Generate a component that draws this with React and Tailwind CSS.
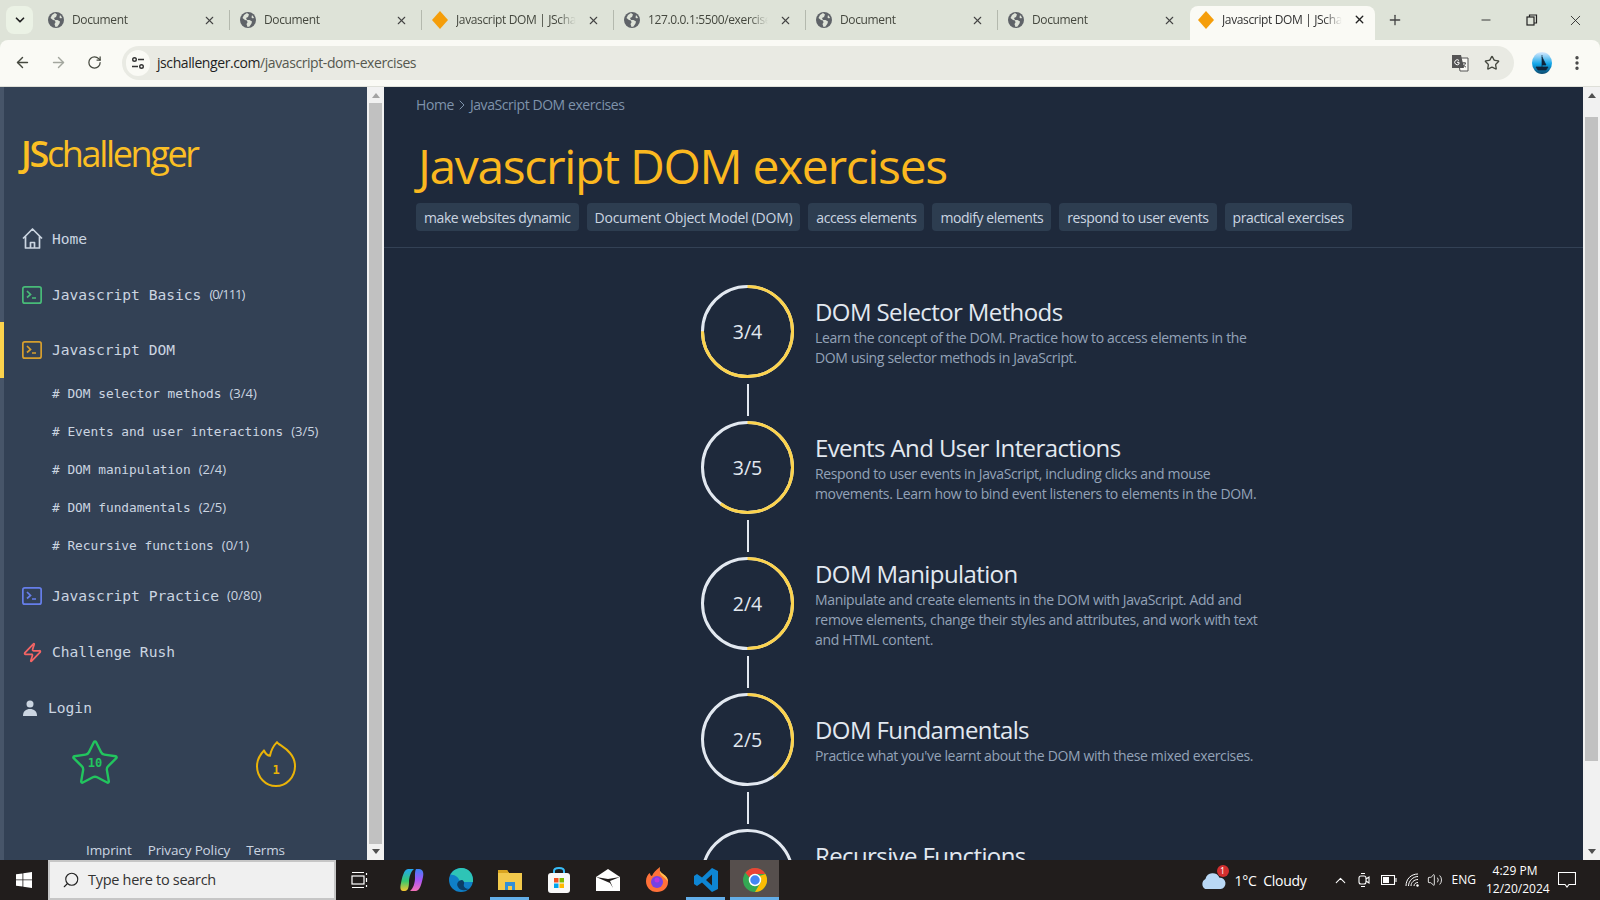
import React from 'react';
import { ArrowLeft, ArrowRight, RotateCw, Star, X, Plus, Minus, ChevronDown, ChevronUp, ChevronRight, EllipsisVertical, Zap, Search, Volume2 } from 'lucide-react';

const sans = 'font-["Open_Sans",sans-serif]';
const mono = 'font-["DejaVu_Sans_Mono",monospace]';

const tabs = [
  { title: 'Document', icon: 'globe' },
  { title: 'Document', icon: 'globe' },
  { title: 'Javascript DOM | JSchallenger', icon: 'js' },
  { title: '127.0.0.1:5500/exercises', icon: 'globe' },
  { title: 'Document', icon: 'globe' },
  { title: 'Document', icon: 'globe' },
];

const chips = [
  'make websites dynamic',
  'Document Object Model (DOM)',
  'access elements',
  'modify elements',
  'respond to user events',
  'practical exercises',
];

const subItems = [
  ['# DOM selector methods', '(3/4)'],
  ['# Events and user interactions', '(3/5)'],
  ['# DOM manipulation', '(2/4)'],
  ['# DOM fundamentals', '(2/5)'],
  ['# Recursive functions', '(0/1)'],
];

const lessons = [
  {
    done: 3,
    total: 4,
    title: 'DOM Selector Methods',
    text: 'Learn the concept of the DOM. Practice how to access elements in the DOM using selector methods in JavaScript.',
  },
  {
    done: 3,
    total: 5,
    title: 'Events And User Interactions',
    text: 'Respond to user events in JavaScript, including clicks and mouse movements. Learn how to bind event listeners to elements in the DOM.',
  },
  {
    done: 2,
    total: 4,
    title: 'DOM Manipulation',
    text: 'Manipulate and create elements in the DOM with JavaScript. Add and remove elements, change their styles and attributes, and work with text and HTML content.',
  },
  {
    done: 2,
    total: 5,
    title: 'DOM Fundamentals',
    text: "Practice what you've learnt about the DOM with these mixed exercises.",
  },
  // description sits below the fold, only the title shows
  { done: 0, total: 1, title: 'Recursive Functions', text: '' },
];

const GlobeIcon = () => (
  <svg width="16" height="16" viewBox="0 0 16 16" className="shrink-0">
    <circle cx="8" cy="8" r="8" fill="#5f6368" />
    <path d="M7 1 4 3 2.500 6 5 8l2 .5.500 2-1 1.500 1 3 2-.5 2-3 .5-2-2.500-1.500H7L6 6l2-1 1-2.500Z M12 3l2 2.500-1 1-1.500-1Z" fill="#dee3d8" />
  </svg>
);

const DiamondIcon = () => (
  <svg width="16" height="18" viewBox="0 0 16 18" className="shrink-0">
    <path d="M8 0 16 9 8 18 0 9Z" fill="#f59e0b" />
  </svg>
);

const Tab = ({ title, icon, last }) => (
  <div className="relative flex h-full w-[192px] shrink-0 items-center pl-[8px]">
    {icon === 'globe' ? <GlobeIcon /> : <DiamondIcon />}
    <span className={`${sans} ml-[8px] w-[120px] overflow-hidden whitespace-nowrap text-[12px] tracking-[-0.03em] text-[#45483f] [mask-image:linear-gradient(to_right,black_85%,transparent)]`}>{title}</span>
    <X size={13} strokeWidth={2} className="absolute left-[163px] text-[#444]" />
    {!last && <span className="absolute left-[189px] h-[20px] w-px bg-[#b4b9ae]" />}
  </div>
);

const TranslateIcon = () => (
  <svg width="18" height="18" viewBox="0 0 18 18" className="ml-auto">
    <path d="M7 4h10v13H9Z" fill="#fafaf5" stroke="#555" strokeWidth="1" />
    <path d="M1 1h9l3 13H1Z" fill="#555" />
    <path d="M8 6.500a2.500 2.500 0 1 0 0 3.500V8.300H6" fill="none" stroke="#fff" strokeWidth="1" />
    <path d="M11 9h4M13 8v1M14.500 9c-.5 2-2 3.500-3.500 4M12 10.500c.5 1 1.500 2 3 2.500" fill="none" stroke="#444" strokeWidth=".9" />
  </svg>
);

const AvatarIcon = () => (
  <svg width="20" height="22" viewBox="0 0 20 22" className="shrink-0">
    <defs>
      <linearGradient id="avatarSky" x1="0" y1="0" x2="0" y2="1">
        <stop offset="0" stopColor="#dbeafe" />
        <stop offset=".55" stopColor="#0ea5e9" />
        <stop offset="1" stopColor="#0c4a6e" />
      </linearGradient>
    </defs>
    <ellipse cx="10" cy="11" rx="10" ry="11" fill="url(#avatarSky)" />
    <path d="M10 3v12M10 5l4 8h-4M4 15h12l-2 3H6Z" fill="#10243a" stroke="#10243a" strokeWidth=".7" />
  </svg>
);

const ChromeBar = () => (
  <div>
    <div className="flex h-[40px] items-center bg-[#dee3d8]">
      <div className="ml-[6px] mr-[7px] flex h-[28px] w-[27px] items-center justify-center rounded-lg bg-[#ebf2e5]">
        <ChevronDown size={14} strokeWidth={3} className="text-[#222]" />
      </div>
      <div className="flex h-full items-center">
        {tabs.map((tab, i) => (
          <Tab key={i} {...tab} last={i === tabs.length - 1} />
        ))}
      </div>
      <div className="relative ml-[-2px] flex h-[34px] w-[185px] shrink-0 items-center self-end rounded-t-lg bg-[#fafaf5] pb-[6px] pl-[8px]">
        <DiamondIcon />
        <span className={`${sans} ml-[8px] w-[120px] overflow-hidden whitespace-nowrap text-[12px] tracking-[-0.03em] text-[#333] [mask-image:linear-gradient(to_right,black_85%,transparent)]`}>Javascript DOM | JSchallenger</span>
        <X size={13} strokeWidth={2.500} className="absolute left-[163px] top-[7px] text-[#222]" />
      </div>
      <Plus size={16} strokeWidth={2} className="ml-[12px] text-[#444]" />
      <Minus size={14} strokeWidth={1.500} className="ml-[76px] text-[#222]" />
      <svg width="12" height="12" viewBox="0 0 12 12" className="ml-[33px]" fill="none" stroke="#222" strokeWidth="1.200">
        <rect x="1" y="3" width="7" height="8" />
        <path d="M3.500 3V1h7v8H8" />
      </svg>
      <X size={17} strokeWidth={1.200} className="ml-[29px] text-[#222]" />
    </div>
    <div className="flex h-[47px] items-center rounded-t-lg border-b border-[#dedfd8] bg-[#fafaf5] pb-[1px]">
      <ArrowLeft size={17} strokeWidth={2} className="ml-[14px] text-[#45483f]" />
      <ArrowRight size={17} strokeWidth={2} className="ml-[19px] text-[#a3a69e]" />
      <RotateCw size={15} strokeWidth={2} className="ml-[20px] text-[#45483f]" />
      <div className="ml-[20px] flex h-[34px] w-[1392px] items-center rounded-full bg-[#e9eae3] pl-[4px] pr-[14px]">
        <div className="flex h-[26px] w-[24px] items-center justify-center rounded-full bg-[#fafaf5]">
          <svg width="14" height="14" viewBox="0 0 14 14" fill="none" stroke="#333" strokeWidth="1.400">
            <circle cx="3.500" cy="3.500" r="1.800" />
            <path d="M7 3.500h6M1 10.500h6" />
            <circle cx="10.500" cy="10.500" r="1.800" />
          </svg>
        </div>
        <span className={`${sans} ml-[7px] text-[14px] tracking-[-0.03em] text-[#1f1f1f]`}>
          jschallenger.com<span className="text-[#55584f]">/javascript-dom-exercises</span>
        </span>
        <TranslateIcon />
        <Star size={16} strokeWidth={2} className="ml-[15px] text-[#45483f]" />
      </div>
      <div className="ml-[18px]"><AvatarIcon /></div>
      <EllipsisVertical size={18} strokeWidth={2.500} className="ml-[16px] text-[#444]" />
    </div>
  </div>
);

const TerminalIcon = ({ color }) => (
  <svg width="20" height="18" viewBox="0 0 20 18" fill="none" stroke={color} strokeWidth="1.700" className="shrink-0">
    <rect x=".85" y=".85" width="18.300" height="16.300" rx="2" />
    <path d="m5 5 3.500 3.500L5 11.500M10 12h4" />
  </svg>
);

const HomeIcon = () => (
  <svg width="21" height="21" viewBox="0 0 21 21" fill="none" stroke="#cbd5e1" strokeWidth="1.700" strokeLinejoin="round" className="shrink-0">
    <path d="M1 10.500 10.500 1 20 10.500M3.500 8v12h14V8M8.500 20v-5.500h4V20" />
  </svg>
);

const UserIcon = () => (
  <svg width="16" height="16" viewBox="0 0 16 16" fill="#cbd5e1" className="shrink-0">
    <circle cx="8" cy="4" r="3.500" />
    <path d="M1 16c0-5 3-7 7-7s7 2 7 7Z" />
  </svg>
);

const NavItem = ({ icon, label, count, active }) => (
  <div className="relative flex h-[56px] items-center pl-[18px]">
    {active && <span className="absolute left-[-4px] top-0 h-full w-[4px] bg-[#fcd34d]" />}
    <span className="flex w-[30px] shrink-0 items-center">{icon}</span>
    <span className={`${mono} text-[14.600px] text-[#cbd5e1]`}>{label}</span>
    {count && (
      <span className={`${sans} ml-[8px] text-[13px] text-[#cbd5e1] ${count === '(0/111)' ? 'tracking-[-0.08em]' : ''}`}>{count}</span>
    )}
  </div>
);

const Sidebar = () => (
  <aside className="flex w-[367px] shrink-0 bg-[#334155]">
    <div className="w-[4px] shrink-0 bg-[#475569]" />
    <div className="flex min-w-0 flex-1 flex-col">
      <div className="h-[124px] pl-[17px] pt-[42px]">
        <span className={`${sans} text-[36px] leading-[50px] tracking-[-2.350px] text-[#fbbf24]`}>
          <span className="font-semibold">JS</span>challenger
        </span>
      </div>
      <NavItem icon={<HomeIcon />} label="Home" />
      <NavItem icon={<TerminalIcon color="#48bb78" />} label="Javascript Basics" count="(0/111)" />
      <NavItem icon={<TerminalIcon color="#d69e2e" />} label="Javascript DOM" active />
      <div className="mb-[4px] mt-[-4px]">
        {subItems.map(([label, count]) => (
          <div key={label} className="flex h-[38px] items-center pl-[48px]">
            <span className={`${mono} text-[12.800px] text-[#cbd5e1]`}>{label}</span>
            <span className={`${sans} ml-[8px] text-[13px] text-[#cbd5e1]`}>{count}</span>
          </div>
        ))}
      </div>
      <NavItem icon={<TerminalIcon color="#667eea" />} label="Javascript Practice" count="(0/80)" />
      <NavItem icon={<Zap size={21} strokeWidth={2} className="text-[#f56565]" />} label="Challenge Rush" />
      <div className="flex h-[56px] items-center pl-[18px]">
        <span className="w-[26px]"><UserIcon /></span>
        <span className={`${mono} text-[14.600px] text-[#cbd5e1]`}>Login</span>
      </div>
      <div className="mt-[3px] flex h-[50px] items-start">
        <div className="relative ml-[68px] flex h-[48px] w-[46px] items-center justify-center">
          <Star size={52} strokeWidth={1.100} className="absolute text-[#22c55e]" />
          <span className={`${mono} relative text-[12px] font-bold text-[#22c55e]`}>10</span>
        </div>
        <div className="relative ml-[137px] flex h-[48px] w-[42px] items-center justify-center">
          <svg width="42" height="48" viewBox="0 0 42 46" fill="none" stroke="#eab308" strokeWidth="2" className="absolute" preserveAspectRatio="none">
            <path d="M22 3c1 3 18 8 18 23a19 19 0 0 1-38 0c0-6 3-11 7-15 1 2 3 5 6 5 1-5 3-9 7-13Z" strokeLinejoin="round" />
          </svg>
          <span className={`${mono} relative mt-[14px] text-[12px] font-bold text-[#eab308]`}>1</span>
        </div>
      </div>
      <div className={`${sans} mt-[51px] flex justify-center gap-[16px] text-[13.500px] tracking-[-0.01em] text-[#cbd5e1]`}>
        <span>Imprint</span>
        <span>Privacy Policy</span>
        <span>Terms</span>
      </div>
    </div>
  </aside>
);

const Scrollbar = ({ thumbTop, thumbHeight, topArrow }) => (
  <div className="relative flex w-[17px] shrink-0 flex-col items-center bg-[#f1f1f1]">
    <span className={`mt-[6px] h-0 w-0 border-x-[4px] border-b-[5px] border-x-transparent ${topArrow}`} />
    <div className="absolute left-[2px] w-[13px] bg-[#c1c1c1]" style={{ top: thumbTop, height: thumbHeight }} />
    <span className="absolute bottom-[6px] h-0 w-0 border-x-[4px] border-t-[5px] border-x-transparent border-t-[#505050]" />
  </div>
);

const ProgressRing = ({ done, total }) => {
  const r = 45;
  const len = 2 * Math.PI * r;
  return (
    <div className="relative flex h-[93px] w-[93px] shrink-0 items-center justify-center">
      <svg width="93" height="93" viewBox="0 0 93 93" className="absolute -rotate-90" fill="none" strokeWidth="3">
        <circle cx="46.500" cy="46.500" r={r} stroke="#e2e8f0" />
        <circle cx="46.500" cy="46.500" r={r} stroke="#fcd34d" strokeDasharray={`${(len * done) / total} ${len}`} />
      </svg>
      <span className={`${sans} relative text-[19.500px] text-[#e2e8f0]`}>{done}/{total}</span>
    </div>
  );
};

const LessonRow = ({ lesson }) => (
  <div>
    <div className="flex h-[93px] items-center gap-[21px]">
      <ProgressRing done={lesson.done} total={lesson.total} />
      <div className="w-[448px]">
        <h3 className={`${sans} text-[24px] leading-[34px] tracking-[-0.025em] text-[#e2e8f0]`}>{lesson.title}</h3>
        <p className={`${sans} mt-[-1px] text-[14px] leading-[20px] tracking-[-0.025em] text-[#94a3b8] ${lesson.text ? '' : 'min-h-[40px]'}`}>{lesson.text}</p>
      </div>
    </div>
    <div className="mb-[5px] ml-[46px] mt-[6px] h-[32px] w-[2px] bg-[#e2e8f0]" />
  </div>
);

const Main = () => (
  <main className="min-w-0 flex-1 overflow-hidden bg-[#1e293b]">
    <div className="h-[161px] border-b border-[#334155] px-[32px]">
      <div className={`${sans} flex items-center pt-[8px] text-[14px] leading-[20px] tracking-[-0.03em] text-[#7f93ab]`}>
        <span>Home</span>
        <ChevronRight size={16} strokeWidth={1.500} />
        <span>JavaScript DOM exercises</span>
      </div>
      <h1 className={`${sans} mt-[19px] pl-[2px] text-[48px] leading-[64px] tracking-[-0.028em] text-[#fbb81f]`}>Javascript DOM exercises</h1>
      <div className="mt-[5px] flex gap-[8px]">
        {chips.map((chip) => (
          <span
            key={chip}
            className={`${sans} flex h-[28px] items-center rounded-[4px] bg-[#2d3d50] px-[8px] text-[14px] text-[#cbd5e1] ${chip.includes('Model') ? 'tracking-[-0.018em]' : 'tracking-[-0.03em]'}`}
          >
            {chip}
          </span>
        ))}
      </div>
    </div>
    <div className="pl-[317px] pt-[37px]">
      {lessons.map((lesson) => (
        <LessonRow key={lesson.title} lesson={lesson} />
      ))}
    </div>
  </main>
);

const CopilotIcon = () => (
  <svg width="24" height="24" viewBox="0 0 24 24">
    <defs>
      <linearGradient id="cpLeft" x1="0" y1="0" x2="0" y2="1">
        <stop offset="0" stopColor="#22a6f0" />
        <stop offset=".55" stopColor="#36c96e" />
        <stop offset="1" stopColor="#f7c52e" />
      </linearGradient>
      <linearGradient id="cpRight" x1="0" y1="0" x2="0" y2="1">
        <stop offset="0" stopColor="#3b82f6" />
        <stop offset=".5" stopColor="#a855f7" />
        <stop offset="1" stopColor="#f472b6" />
      </linearGradient>
    </defs>
    <path d="M8 1h6c-3 2-5 8-5 13s-1 9-4 9H3C0 23 0 19 1 15 2 10 4 1 8 1Z" fill="url(#cpLeft)" />
    <path d="M16 1h3c4 0 5 4 4 8-1 5-3 14-7 14h-6c3-2 5-8 5-13s0-7 1-9Z" fill="url(#cpRight)" />
  </svg>
);

const EdgeIcon = () => (
  <svg width="24" height="24" viewBox="0 0 24 24">
    <circle cx="12" cy="12" r="12" fill="#0f7fc7" />
    <path d="M1.500 7C4 2 8 0 13 0c6 0 11 5 11 12v2H11c-1-5-6-8-9.500-7Z" fill="#2ec4b6" />
    <path d="M13 12c-4 0-6 4-4 7 2 4 7 4 11 2-4 0-6-3-5-5 .5-1.500-.5-4-2-4Z" fill="#0b3d66" />
  </svg>
);

const FolderIcon = () => (
  <svg width="24" height="24" viewBox="0 0 24 24">
    <path d="M0 2h9l2 3h13v17H0Z" fill="#f2c94c" />
    <path d="M0 2h9l2 3H0Z" fill="#d9a520" />
    <path d="M7 22v-8h10v8h-3v-4h-4v4Z" fill="#2f8fd8" />
  </svg>
);

const StoreIcon = () => (
  <svg width="24" height="26" viewBox="0 0 24 26">
    <path d="M7 7V4c0-4 10-4 10 0v3" fill="none" stroke="#38bdf8" strokeWidth="2" />
    <rect x="1" y="6" width="22" height="20" rx="3" fill="#f8f8f8" />
    <rect x="7" y="11" width="4.500" height="4.500" fill="#f25022" />
    <rect x="12.500" y="11" width="4.500" height="4.500" fill="#7fba00" />
    <rect x="7" y="16.500" width="4.500" height="4.500" fill="#00a4ef" />
    <rect x="12.500" y="16.500" width="4.500" height="4.500" fill="#ffb900" />
  </svg>
);

const MailIcon = () => (
  <svg width="24" height="22" viewBox="0 0 24 22">
    <path d="M0 8 12 0l12 8v14H0Z" fill="#fff" />
    <path d="M0 8l14 6 3 5 -3-7L24 8 12 10Z" fill="#211d1c" />
  </svg>
);

const FirefoxIcon = () => (
  <svg width="24" height="26" viewBox="0 0 24 26">
    <path d="M12 25C5 25 1 20 1 14c0-4 2-7 4-8 0 2 1 3 2 3 1-3 4-6 8-9-1 3 0 5 3 7 3 2 5 4 5 8 0 6-5 10-11 10Z" fill="#ff7139" />
    <path d="M15 0c-1 3 0 5 3 7 3 2 5 4 5 8-3-5-6-5-8-9Z" fill="#ffbd4f" />
    <circle cx="12" cy="15" r="6" fill="#7542e5" />
    <circle cx="12" cy="13" r="2.500" fill="#b833e1" />
  </svg>
);

const VscodeIcon = () => (
  <svg width="24" height="24" viewBox="0 0 24 24">
    <path d="M18 0 24 3v18l-6 3-10-9.500L3 18l-3-2v-8l3-2 5 3.500Zm0 6.500-6 5.500 6 5.500Z" fill="#0e86d4" />
  </svg>
);

const ChromeIcon = () => (
  <svg width="24" height="24" viewBox="0 0 24 24">
    <circle cx="12" cy="12" r="12" fill="#34a853" />
    <path d="M12 0a12 12 0 0 1 10.400 6H12a6 6 0 0 0-5.500 3.500L2.400 4.800A12 12 0 0 1 12 0Z" fill="#ea4335" />
    <path d="M22.400 6A12 12 0 0 1 12 24l5-8.500A6 6 0 0 0 16.500 8Z" fill="#fbbc04" />
    <circle cx="12" cy="12" r="5.500" fill="#4285f4" stroke="#fff" strokeWidth="1.500" />
  </svg>
);

const TaskSlot = ({ children, underline, active }) => (
  <div className={`relative flex h-full w-[49px] items-center justify-center ${active ? 'bg-[#564f4d]' : ''}`}>
    {children}
    {underline && <span className={`absolute bottom-0 h-[3px] bg-[#63aee8] ${active ? 'inset-x-0' : 'inset-x-[5px]'}`} />}
  </div>
);

const Taskbar = () => (
  <div className="flex h-[40px] shrink-0 items-center bg-[#211d1c] text-white">
    <div className="flex h-full w-[48px] items-center justify-center">
      <svg width="16" height="16" viewBox="0 0 16 16" fill="#fff">
        <path d="M0 2.300 6.500 1.400v6.100H0ZM7.300 1.300 16 0v7.500H7.300ZM0 8.300h6.500v6.200L0 13.700ZM7.300 8.300H16V16l-8.700-1.300Z" />
      </svg>
    </div>
    <div className="flex h-full w-[288px] items-center border-2 border-[#c6c6c6] bg-[#f0f0f0] pl-[12px]">
      <Search size={18} strokeWidth={1.500} className="-scale-x-100 text-[#222]" />
      <span className={`${sans} ml-[8px] text-[14.500px] tracking-[-0.02em] text-[#333]`}>Type here to search</span>
    </div>
    <div className="flex h-full w-[48px] items-center justify-center">
      <svg width="18" height="16" viewBox="0 0 18 16" fill="none" stroke="#fff" strokeWidth="1.200">
        <path d="M1 .5h12M1 15.500h12M15.500 1v2M15.500 6v4M15.500 13v2" />
        <rect x="1" y="4" width="12" height="8" />
      </svg>
    </div>
    <div className="ml-[3px] flex h-full items-center">
      <TaskSlot><CopilotIcon /></TaskSlot>
      <TaskSlot><EdgeIcon /></TaskSlot>
      <TaskSlot underline><FolderIcon /></TaskSlot>
      <TaskSlot><StoreIcon /></TaskSlot>
      <TaskSlot><MailIcon /></TaskSlot>
      <TaskSlot><FirefoxIcon /></TaskSlot>
      <TaskSlot underline><VscodeIcon /></TaskSlot>
      <TaskSlot underline active><ChromeIcon /></TaskSlot>
    </div>
    <div className="ml-auto flex h-full items-center">
      <div className="relative mr-[9px]">
        <svg width="26" height="18" viewBox="0 0 24 16" preserveAspectRatio="none">
          <path d="M5 16a5 5 0 0 1 0-9 7 7 0 0 1 13-1 5 5 0 0 1 1 10Z" fill="#b9d8f5" />
        </svg>
        <span className="absolute right-[-3px] top-[-6px] flex h-[12px] w-[12px] items-center justify-center rounded-full bg-[#d32f2f] text-[8px]">1</span>
      </div>
      <span className={`${sans} w-[88px] whitespace-pre text-[14px] tracking-[-0.02em]`}>1°C  Cloudy</span>
      <ChevronUp size={17} strokeWidth={1.500} className="ml-[9px]" />
      <svg width="12" height="16" viewBox="0 0 12 16" fill="none" stroke="#fff" strokeWidth="1.100" className="ml-[9px]">
        <rect x="1" y="4" width="7" height="8" rx="2" />
        <path d="M8 7l3-2v6l-3-2M3 1.500h4M3 14.500h4" />
      </svg>
      <svg width="16" height="10" viewBox="0 0 16 10" fill="none" stroke="#fff" strokeWidth="1.100" className="ml-[11px]">
        <rect x=".5" y=".5" width="13" height="9" />
        <rect x="2" y="2" width="6" height="6" fill="#fff" stroke="none" />
        <path d="M15 3v4" />
      </svg>
      <svg width="15" height="14" viewBox="0 0 15 14" fill="none" stroke="#fff" strokeWidth="1" className="ml-[8px]">
        <path d="M1 13C1 6 6 1 13 1M3.500 13C3.500 8 8 3.500 13 3.500M6 13c0-3.500 3-6.500 7-6.500M9 13c0-2 1.500-3.500 4-3.500" />
        <circle cx="12.500" cy="12.500" r="1.200" fill="#fff" stroke="none" />
      </svg>
      <Volume2 size={16} strokeWidth={1.300} className="ml-[7px]" />
      <span className={`${sans} ml-[9px] text-[12px]`}>ENG</span>
      <div className={`${sans} ml-[10px] w-[58px] whitespace-nowrap text-center text-[12px] leading-[18px]`}>
        <div>4:29 PM</div>
        <div>12/20/2024</div>
      </div>
      <svg width="18" height="16" viewBox="0 0 18 16" fill="none" stroke="#fff" strokeWidth="1.100" className="ml-[14px] mr-[24px]">
        <path d="M.5.500h17v12H11L9 15l-2-2.500H.5Z" />
      </svg>
    </div>
  </div>
);

export default function App() {
  return (
    <div className="flex h-screen w-[1600px] flex-col overflow-hidden bg-[#dee3d8]">
      <ChromeBar />
      <div className="flex min-h-0 flex-1">
        <Sidebar />
        <Scrollbar thumbTop={16} thumbHeight={741} topArrow="border-b-[#a3a3a3]" />
        <Main />
        <Scrollbar thumbTop={30} thumbHeight={644} topArrow="border-b-[#505050]" />
      </div>
      <Taskbar />
    </div>
  );
}
